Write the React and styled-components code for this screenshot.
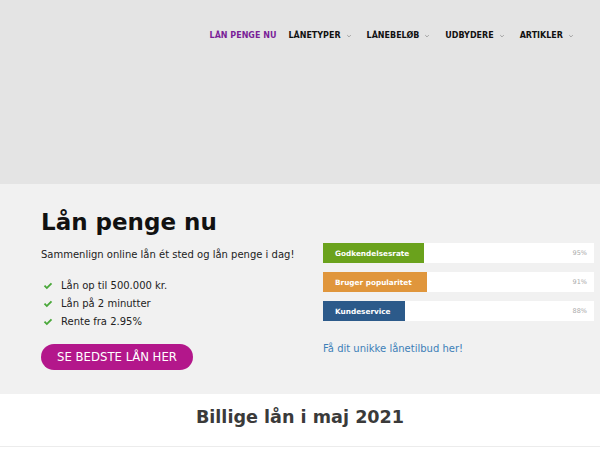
import React from "react"
import styled, { createGlobalStyle } from "styled-components"

const GlobalStyle = createGlobalStyle`
  * { box-sizing: border-box; }
  body {
    margin: 0;
    font-family: "DejaVu Sans", Verdana, sans-serif;
    background: #ffffff;
    color: #222;
  }
`

const Header = styled.header`
  height: 184px;
  background-color: #e4e4e4;
  display: flex;
  justify-content: flex-end;
  align-items: flex-start;
  padding: 31px 23px 0 0;
`

const Nav = styled.nav`
  display: flex;
  align-items: center;
  gap: 12px;
`

const NavItem = styled.a`
  display: flex;
  align-items: center;
  gap: 5px;
  margin-right: ${(p) => (p.$menu ? "3px" : "0")};
  font-size: 8px;
  font-weight: bold;
  text-transform: uppercase;
  color: ${(p) => (p.$active ? "#7a1f98" : "#111")};
  text-decoration: none;

  svg {
    width: 6px;
    height: 6px;
    stroke: #888;
  }
`

const Hero = styled.section`
  background-color: #f1f1f1;
  height: 210px;
  display: grid;
  grid-template-columns: 282px 271px;
  padding: 24px 0 0 41px;
`

const Intro = styled.div`
  display: flex;
  flex-direction: column;
`

const Title = styled.h1`
  margin: 0;
  font-size: 23px;
  line-height: 28px;
  font-weight: bold;
  color: #111;
`

const Lead = styled.p`
  margin: 12px 0 0;
  font-size: 10px;
  line-height: 14px;
  color: #222;
`

const Checks = styled.ul`
  list-style: none;
  margin: 17px 0 0;
  padding: 0;
  display: flex;
  flex-direction: column;
  gap: 4px;
`

const Check = styled.li`
  display: flex;
  align-items: center;
  gap: 8px;
  font-size: 10px;
  line-height: 14px;
  color: #222;
  padding-left: 2px;

  svg {
    width: 10px;
    height: 10px;
    fill: #4aa83a;
  }
`

const CTA = styled.a`
  margin-top: 15px;
  width: 152px;
  height: 26px;
  border-radius: 13px;
  background-color: #b3178b;
  color: #fff;
  font-size: 11.7px;
  display: flex;
  align-items: center;
  justify-content: center;
  text-decoration: none;
`

const Stats = styled.div`
  padding-top: 35px;
  display: flex;
  flex-direction: column;
`

const Bars = styled.div`
  display: flex;
  flex-direction: column;
  gap: 9px;
`

const BarTrack = styled.div`
  height: 20px;
  background-color: #fff;
  display: flex;
  align-items: center;
  justify-content: space-between;
  padding-right: 7px;
`

const BarFill = styled.div`
  height: 100%;
  background-color: ${(p) => p.$color};
  color: #fff;
  font-size: 7.3px;
  font-weight: bold;
  display: flex;
  align-items: center;
  padding-left: 12px;
  white-space: nowrap;
`

const Percent = styled.span`
  font-size: 6.5px;
  color: #aaa;
`

const OfferLink = styled.a`
  margin-top: 21px;
  font-size: 10px;
  line-height: 14px;
  color: #3d7fb8;
  text-decoration: none;
`

const Section = styled.section`
  background: #fff;
  height: 53px;
  display: flex;
  justify-content: center;
  padding-top: 13px;
  border-bottom: 1px solid #ececec;
`

const SectionTitle = styled.h2`
  margin: 0;
  font-size: 17.6px;
  line-height: 21px;
  font-weight: bold;
  color: #3a3a3a;
`

const Chevron = () => (
  <svg viewBox="0 0 10 10" fill="none" strokeWidth="1.2">
    <path d="M2 3.5 L5 6.5 L8 3.5" />
  </svg>
)

const Tick = () => (
  <svg viewBox="0 0 12 12">
    <path d="M1 6.4 L2.6 4.9 L4.6 6.8 L9.4 2 L11 3.5 L4.6 9.8 Z" />
  </svg>
)

const navItems = [
  { label: "Lån penge nu", active: true },
  { label: "Lånetyper", menu: true },
  { label: "Lånebeløb", menu: true },
  { label: "Udbydere", menu: true },
  { label: "Artikler", menu: true },
]

const stats = [
  { label: "Godkendelsesrate", value: 95, width: 101, color: "#6aa21c" },
  { label: "Bruger popularitet", value: 91, width: 104, color: "#e0963c" },
  { label: "Kundeservice", value: 88, width: 82, color: "#2c5a8a" },
]

function App() {
  return (
    <>
      <GlobalStyle />
      <Header>
        <Nav>
          {navItems.map((item) => (
            <NavItem key={item.label} href="#" $active={item.active} $menu={item.menu}>
              {item.label}
              {item.menu && <Chevron />}
            </NavItem>
          ))}
        </Nav>
      </Header>
      <Hero>
        <Intro>
          <Title>Lån penge nu</Title>
          <Lead>Sammenlign online lån ét sted og lån penge i dag!</Lead>
          <Checks>
            <Check><Tick />Lån op til 500.000 kr.</Check>
            <Check><Tick />Lån på 2 minutter</Check>
            <Check><Tick />Rente fra 2.95%</Check>
          </Checks>
          <CTA href="#">SE BEDSTE LÅN HER</CTA>
        </Intro>
        <Stats>
          <Bars>
            {stats.map((s) => (
              <BarTrack key={s.label}>
                <BarFill $color={s.color} style={{ width: s.width }}>
                  {s.label}
                </BarFill>
                <Percent>{s.value}%</Percent>
              </BarTrack>
            ))}
          </Bars>
          <OfferLink href="#">Få dit unikke lånetilbud her!</OfferLink>
        </Stats>
      </Hero>
      <Section>
        <SectionTitle>Billige lån i maj 2021</SectionTitle>
      </Section>
    </>
  )
}

export default App
